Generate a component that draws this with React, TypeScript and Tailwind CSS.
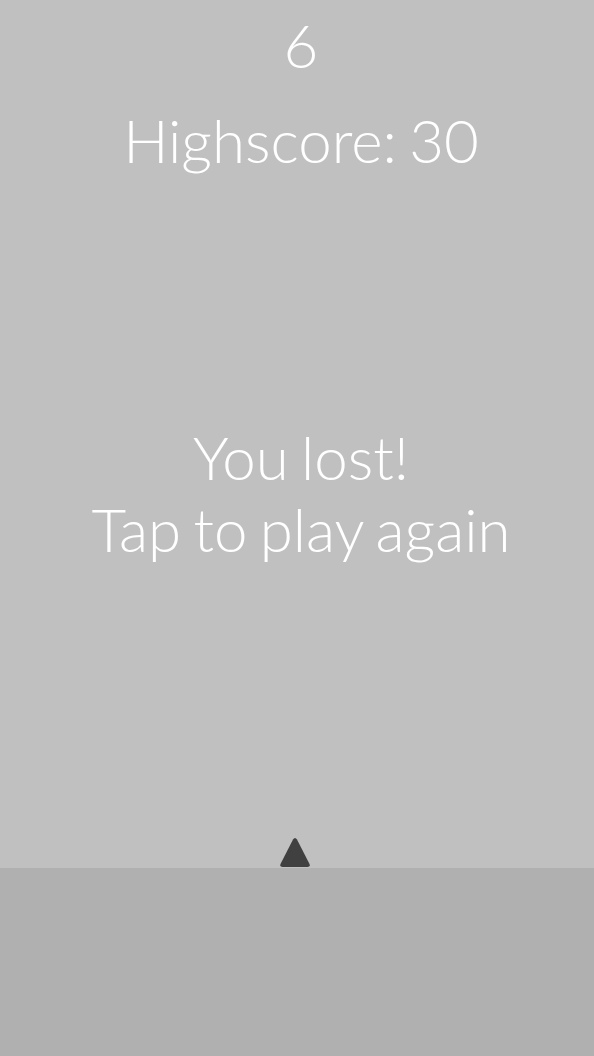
export default function App() {
  return (
    <div
      className="flex h-[1056px] w-[594px] flex-col bg-[#c0c0c0] text-white"
      style={{ fontFamily: 'Lato, "Open Sans", sans-serif' }}
    >
      <div className="flex flex-1 flex-col items-center font-light text-[60px] leading-[72px] [word-spacing:-4px]">
        <div className="mt-[9px] pl-[8px]">6</div>
        <div className="mt-[23px] pl-[8px]">Highscore: 30</div>
        <div className="mt-[245px] pl-[8px] text-center">
          <div>You lost!</div>
          <div>Tap to play again</div>
        </div>
        <div className="mt-auto">
          <svg width="32" height="31" viewBox="0 0 32 31" className="translate-x-[-2px]">
            <path d="M14 2.5 Q16 -0.5 18 2.5 L30.5 27 Q31.5 30 28.5 30 L3.5 30 Q0.5 30 1.5 27 Z" fill="#404040" />
          </svg>
        </div>
      </div>
      <div className="h-[188px] bg-[#b0b0b0]" />
    </div>
  );
}
